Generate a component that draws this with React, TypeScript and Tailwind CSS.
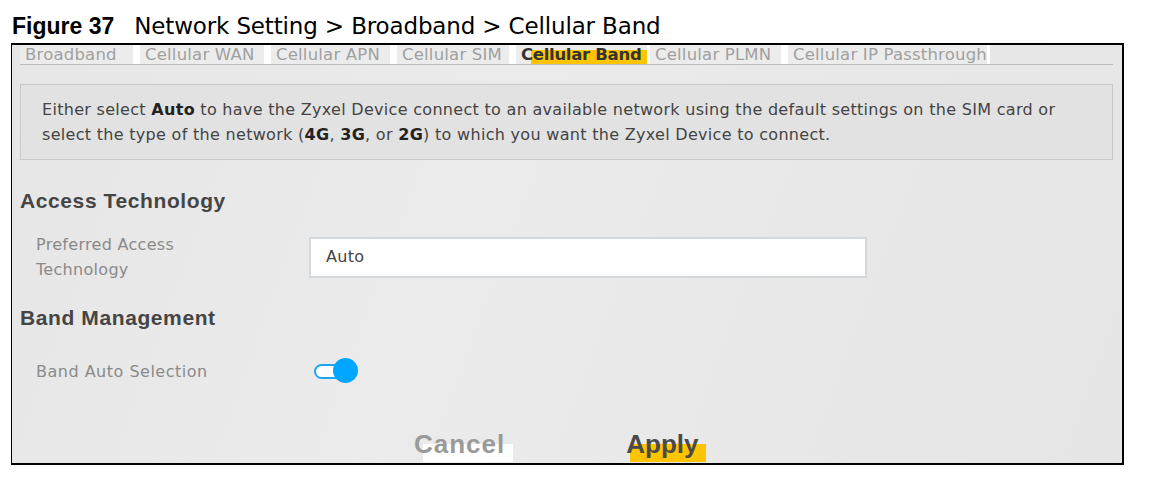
import { useState } from 'react';

const tabs = [
  { label: 'Broadband', w: 'w-[120px]' },
  { label: 'Cellular WAN', w: 'w-[131px]' },
  { label: 'Cellular APN', w: 'w-[126px]' },
  { label: 'Cellular SIM', w: 'w-[119px]' },
  { label: 'Cellular Band', w: 'w-[134px]', active: true },
  { label: 'Cellular PLMN', w: 'w-[138px]' },
  { label: 'Cellular IP Passthrough', w: 'w-[202px]' },
];

function Toggle({ on }: { on: boolean }) {
  return (
    <div className="relative w-[46px] h-[26px] flex items-center">
      <div className="w-[32px] h-[15px] rounded-full border-[2px] border-[#19a6f5] bg-white" />
      {on && <div className="absolute right-[2px] top-0 w-[25px] h-[25px] rounded-full bg-[#00a6ff]" />}
    </div>
  );
}

export default function App() {
  const [auto, setAuto] = useState(true);

  return (
    <div className="w-[1157px] h-[482px] bg-white font-['DejaVu_Sans',sans-serif] text-[#444]">

      {/* ── Figure caption ─────────────────────────────────────────── */}
      <div className="h-[43px] pl-[12px] pt-[13px] flex items-baseline text-black text-[23px] leading-[26px]">
        <span className="font-bold font-['Liberation_Sans',Arial,sans-serif]">Figure 37</span>
        <span className="ml-[20px] tracking-[-0.15px]">Network Setting &gt; Broadband &gt; Cellular Band</span>
      </div>

      {/* ── Screenshot frame ───────────────────────────────────────── */}
      <div className="ml-[11px] w-[1113px] h-[422px] border-t-[2px] border-l border-r-[2px] border-b-[2px] border-black bg-[linear-gradient(110deg,#e6e6e6_0%,#ebebeb_40%,#e9e9e9_60%,#e5e5e5_100%)] pl-[8px] pr-[9px] flex flex-col">

        {/* tabs */}
        <div className="flex h-[20px] border-b border-[#bcbcbc] text-[16.5px] leading-[20px] tracking-[0.2px]">
          {tabs.map((t) => (
            <div key={t.label} className={`${t.w} flex`}>
              <div className="flex-1 pl-[5px] bg-[#ececec] whitespace-nowrap">
                {t.active ? (
                  <span className="font-bold text-[#333] tracking-[-0.3px] bg-[linear-gradient(to_right,transparent_10px,#ffc400_10px)] bg-[length:100%_14px] bg-bottom bg-no-repeat pr-[6px]">
                    {t.label}
                  </span>
                ) : (
                  <span className="text-[#a0a0a0]">{t.label}</span>
                )}
              </div>
              <div className="w-[7px] bg-white" />
            </div>
          ))}
        </div>

        {/* info box */}
        <div className="mt-[19px] h-[76px] bg-[#e2e2e2] border border-[#c9c9c9] pl-[21px] pt-[12px] text-[16px] leading-[25px] text-[#444] tracking-[0.3px]">
          <p>
            Either select <b className="text-[#222]">Auto</b> to have the Zyxel Device connect to an available network using the default settings on the SIM card or
          </p>
          <p>
            select the type of the network (<b className="text-[#222]">4G</b>, <b className="text-[#222]">3G</b>, or <b className="text-[#222]">2G</b>) to which you want the Zyxel Device to connect.
          </p>
        </div>

        {/* access technology */}
        <h2 className="mt-[29px] font-['Liberation_Sans',Arial,sans-serif] text-[21px] leading-[24px] font-bold text-[#454545] tracking-[0.6px]">Access Technology</h2>
        <div className="mt-[19px] flex items-center">
          <div className="w-[289px] pl-[16px] text-[16px] leading-[25px] text-[#8a8a8a] tracking-[0.3px]">
            Preferred Access<br />Technology
          </div>
          <div className="w-[558px] h-[41px] bg-white border-[2px] border-[#d3d8dd] pl-[15px] flex items-center text-[16px] text-[#444] tracking-[0.3px]">
            Auto
          </div>
        </div>

        {/* band management */}
        <h2 className="mt-[24px] font-['Liberation_Sans',Arial,sans-serif] text-[21px] leading-[24px] font-bold text-[#454545] tracking-[0.6px]">Band Management</h2>
        <div className="mt-[28px] flex items-center">
          <div className="w-[294px] pl-[16px] text-[16px] leading-[25px] text-[#8a8a8a] tracking-[0.5px]">
            Band Auto Selection
          </div>
          <button onClick={() => setAuto(!auto)}>
            <Toggle on={auto} />
          </button>
        </div>

        {/* buttons */}
        <div className="mt-[45px] flex items-end font-['Liberation_Sans',Arial,sans-serif] text-[26px] leading-[30px] font-bold">
          <div className="ml-[394px] relative">
            <div className="absolute left-[9px] top-[15px] w-[90px] h-[18px] bg-white" />
            <span className="relative text-[#9a9a9a] tracking-[1px]">Cancel</span>
          </div>
          <div className="ml-[121px] relative">
            <div className="absolute left-[4px] top-[15px] w-[76px] h-[18px] bg-[#ffc400]" />
            <span className="relative text-[#4a4a4a]">Apply</span>
          </div>
        </div>
      </div>
    </div>
  );
}
